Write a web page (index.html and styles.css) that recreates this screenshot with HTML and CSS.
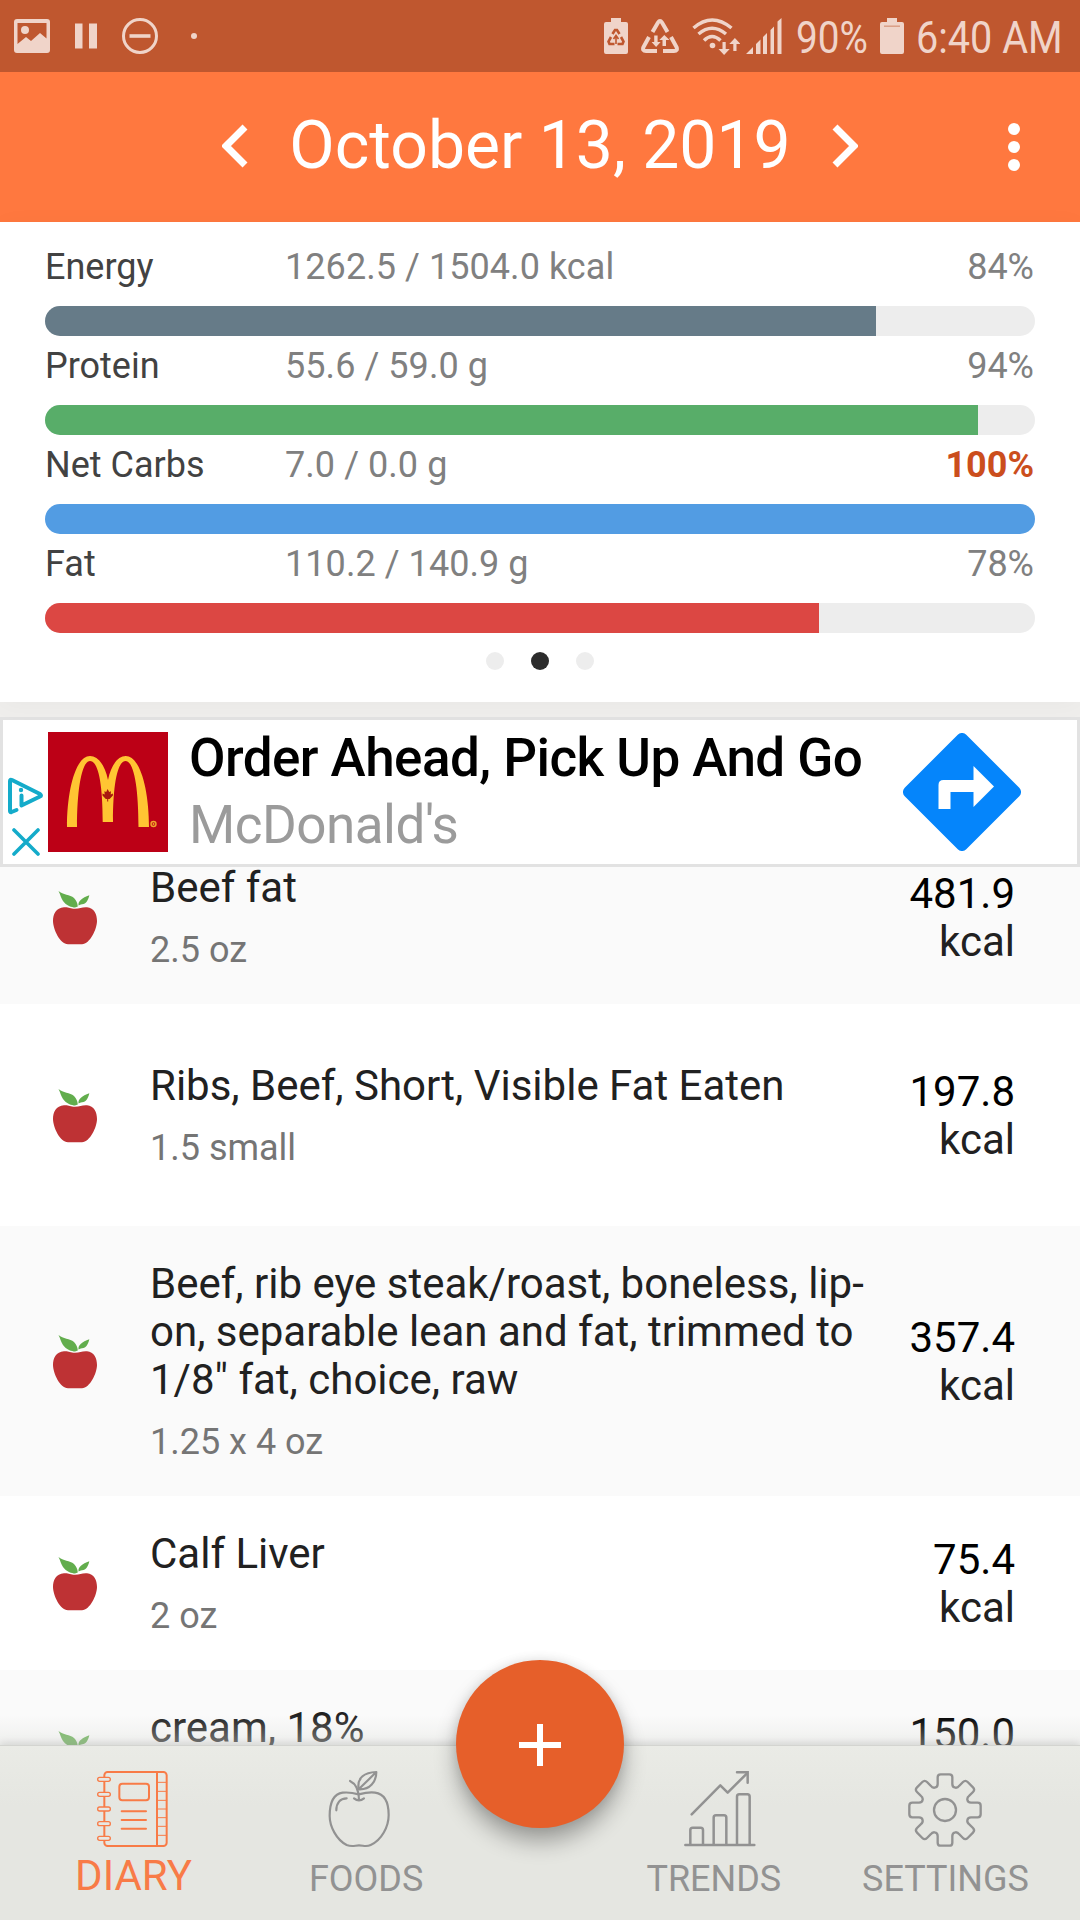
FILE: index.html
```html
<!DOCTYPE html>
<html lang="en">
<head>
    <meta charset="UTF-8">
    <meta name="viewport" content="width=device-width, initial-scale=1.0">
    <title>Diary</title>
    <link rel="stylesheet" href="styles.css">
</head>
<body>
    <!-- Shared food icon -->
    <svg class="defs" width="0" height="0">
        <symbol id="apple" viewBox="0 0 44 54">
            <path fill="#62ad4d" d="M5.500 0C10 4 17 3.500 21 7C23.500 9.500 24.500 12 24.800 15.500L22 16.500C19 16.500 13 14.500 10 10C8 7 7.500 4 5.500 0ZM25.500 14.500C25 10 29 7 36.300 4.300C35.500 8 34 12 30.500 13C28.500 13.500 27 13.500 25.500 14.500Z"/>
            <path fill="#be3234" d="M22 17.800C17 17.500 16 16 11 16.300C3 17 0 23 0 30C0 38 7 53.300 15 53.300H29C37 53 44 38 44 30C44 23 41 17 34 16.300C29 16 27 17.500 22 17.800Z"/>
        </symbol>
    </svg>

    <div class="app">
        <div class="status-bar">
            <svg class="st-gallery" width="36" height="36" viewBox="0 0 36 36"><path fill="currentColor" fill-rule="evenodd" d="M3 1H33Q36 1 36 4V32Q36 35 33 35H3Q0 35 0 32V4Q0 1 3 1ZM3.500 5V26L12 19L17 23L26 15L32.500 20.500V5Z"/><circle cx="11" cy="12" r="4" fill="currentColor"/></svg>
            <svg class="st-pause" width="22" height="36" viewBox="0 0 22 36"><path fill="currentColor" d="M0 5.500h7.500v25H0zM14 5.500h8v25h-8z"/></svg>
            <svg class="st-minus" width="36" height="36" viewBox="0 0 36 36"><circle cx="18" cy="18" r="16.500" fill="none" stroke="currentColor" stroke-width="3"/><path fill="currentColor" d="M7.500 16.200h21v3.600h-21z"/></svg>
            <svg class="st-dot" width="6" height="6" viewBox="0 0 6 6"><circle cx="3" cy="3" r="3" fill="currentColor"/></svg>

            <div class="status-right">
                <svg width="24" height="36" viewBox="0 0 24 36"><path fill="currentColor" d="M7 0H17V4H22Q24 4 24 6V34Q24 36 22 36H2Q0 36 0 34V6Q0 4 2 4H7Z"/><g fill="none" stroke="#bf572f" stroke-width="2.600"><path d="M8.500 16L11 12H13L15.500 16"/><path d="M7 19L4.500 23.500L5.500 26H10.500"/><path d="M17 19L19.500 23.500L18.500 26H13.500"/><path stroke-width="1.600" d="M12 26V18M9.500 21L12 17.500L14.500 21"/></g></svg>
                <svg class="st-recycle" width="38" height="36" viewBox="0 0 38 36"><g fill="none" stroke="currentColor" stroke-width="4"><path d="M11.500 14L17 4.500Q19 1.500 21 4.500L26.500 14"/><path d="M8 19L2.500 29Q1 33 5 33H16"/><path d="M30 19L35.500 29Q37 33 33 33H22"/></g><path fill="currentColor" d="M13.200 17.500h3.400v6.500h3l-4.500 5l-4.500-5h2.600zM21.500 28h3.500v-6h3.500l-5.200-5l-5 5h3.200z"/></svg>
                <svg class="st-wifi" width="48" height="37" viewBox="0 0 48 37"><g fill="none" stroke="currentColor" stroke-width="3.500"><path d="M1.500 10Q20 -6 39.500 10"/><path d="M6.500 16Q20 4.500 34 16"/><path d="M12 22.500Q20 14.500 28.500 22.500"/></g><circle cx="20.500" cy="27.500" r="2.800" fill="currentColor"/><path fill="currentColor" d="M30.500 24h3.200v7h4l-5.600 6l-5.600-6h4zM41.300 33h3.200v-7h4l-5.600-6l-5.600 6h4z"/></svg>
                <svg class="st-signal" width="36" height="36" viewBox="0 0 36 36"><path fill="currentColor" d="M0 36L7 29V36ZM10 26L14.500 21.500V36H10ZM17 19L21 15V36H17ZM24.500 12L28 8.500V36H24.500ZM31.500 3.500L35.500 0V36H31.500Z"/></svg>
                <span class="st-battery-text"><span>90%</span></span>
                <svg class="st-battery" width="24" height="36" viewBox="0 0 24 36"><path fill="currentColor" d="M7 0H17V4H22Q24 4 24 6V34Q24 36 22 36H2Q0 36 0 34V6Q0 4 2 4H7Z"/><path fill="#d99a80" d="M4 7.500h16v1.400H4z"/></svg>
                <span class="st-time"><span>6:40 AM</span></span>
            </div>
        </div>

        <header class="date-bar">
            <svg class="chevron" width="26" height="44" viewBox="0 0 26 44"><path fill="none" stroke="#fff" stroke-width="7" d="M23 3L4 22L23 41"/></svg>
            <h1>October 13, 2019</h1>
            <svg class="chevron" width="26" height="44" viewBox="0 0 26 44"><path fill="none" stroke="#fff" stroke-width="7" d="M3 3L22 22L3 41"/></svg>
            <svg class="more" width="12" height="48" viewBox="0 0 12 48"><g fill="#fff"><circle cx="6" cy="6" r="6"/><circle cx="6" cy="24" r="6"/><circle cx="6" cy="42" r="6"/></g></svg>
        </header>

        <section class="summary">
            <div class="nutrient">
                <div class="nutrient-text"><span class="name">Energy</span><span class="amount">1262.5 / 1504.0 kcal</span><span class="percent">84%</span></div>
                <div class="track"><div class="fill energy" style="width: 83.94%"></div></div>
            </div>
            <div class="nutrient">
                <div class="nutrient-text"><span class="name">Protein</span><span class="amount">55.6 / 59.0 g</span><span class="percent">94%</span></div>
                <div class="track"><div class="fill protein" style="width: 94.24%"></div></div>
            </div>
            <div class="nutrient">
                <div class="nutrient-text"><span class="name">Net Carbs</span><span class="amount">7.0 / 0.0 g</span><span class="percent over">100%</span></div>
                <div class="track"><div class="fill carbs" style="width: 100%"></div></div>
            </div>
            <div class="nutrient">
                <div class="nutrient-text"><span class="name">Fat</span><span class="amount">110.2 / 140.9 g</span><span class="percent">78%</span></div>
                <div class="track"><div class="fill fat" style="width: 78.18%"></div></div>
            </div>
            <div class="dots"><i></i><i class="active"></i><i></i></div>
        </section>

        <section class="ad">
            <div class="ad-controls">
                <svg width="36" height="38" viewBox="0 0 36 38"><path fill="none" stroke="#14abca" stroke-width="4" stroke-linejoin="round" stroke-linecap="round" d="M8.500 33L3.500 35Q2 35.500 2 34V4Q2 2 4 3L32 17Q34 18.500 32 19.500L13.500 28.500V18.500"/><circle cx="13" cy="13" r="2.200" fill="#14abca"/></svg>
                <svg class="ad-close" width="28" height="28" viewBox="0 0 28 28"><path fill="none" stroke="#14abca" stroke-width="3.600" stroke-linecap="round" d="M2 2L26 26M26 2L2 26"/></svg>
            </div>
            <svg class="ad-logo" width="120" height="120" viewBox="0 0 120 120">
                <rect width="120" height="120" fill="#bc0016"/>
                <path fill="#ffc533" d="M19 95C19 57 28 24 42 24C50 24 57 33 60 48C63 33 70 24 77.700 24C92 24 101 57 101 95H90.500C90.500 56 86 29 77.500 29C70 29 65 50 65 90H54.700C54.700 50 50 29 42 29C34 29 29 56 29 95Z"/>
                <path fill="#a9190f" d="M59.600 57l1.600 3l1.800-.8l-.3 3.200l2.200-.8v2l-3.300 3.300h-1.400v2.500h-1v-2.500h-1.400l-3.300-3.300v-2l2.200 .8l-.3-3.200l1.800 .8z"/>
                <circle cx="105.500" cy="92" r="2.500" fill="none" stroke="#f0a52c" stroke-width="1.400"/><circle cx="105.500" cy="92" r="1" fill="#f0a52c"/>
            </svg>
            <div class="ad-text">
                <div class="ad-title">Order Ahead, Pick Up And Go</div>
                <div class="ad-brand">McDonald's</div>
            </div>
            <svg class="ad-go" width="118" height="118" viewBox="0 0 118 118"><rect x="15.500" y="15.500" width="87" height="87" rx="6" fill="#0585fb" transform="rotate(45 59 59)"/><path fill="#fff" d="M35.500 76V52Q35.500 47 40.500 47H70.500V33L91 53.500L70.500 74V59H47.500V76Z"/></svg>
        </section>

        <main class="food-list">
            <div class="food">
                <svg class="food-icon"><use href="#apple"/></svg>
                <div class="food-info"><div class="food-name">Beef fat</div><div class="food-qty">2.5 oz</div></div>
                <div class="food-energy"><span>481.9</span> kcal</div>
            </div>
            <div class="food tall">
                <svg class="food-icon"><use href="#apple"/></svg>
                <div class="food-info"><div class="food-name">Ribs, Beef, Short, Visible Fat Eaten</div><div class="food-qty">1.5 small</div></div>
                <div class="food-energy"><span>197.8</span> kcal</div>
            </div>
            <div class="food">
                <svg class="food-icon"><use href="#apple"/></svg>
                <div class="food-info"><div class="food-name">Beef, rib eye steak/roast, boneless, lip-on, separable lean and fat, trimmed to 1/8" fat, choice, raw</div><div class="food-qty">1.25 x 4 oz</div></div>
                <div class="food-energy"><span>357.4</span> kcal</div>
            </div>
            <div class="food">
                <svg class="food-icon"><use href="#apple"/></svg>
                <div class="food-info"><div class="food-name">Calf Liver</div><div class="food-qty">2 oz</div></div>
                <div class="food-energy"><span>75.4</span> kcal</div>
            </div>
            <div class="food">
                <svg class="food-icon"><use href="#apple"/></svg>
                <div class="food-info"><div class="food-name">cream, 18%</div><div class="food-qty"></div></div>
                <div class="food-energy"><span>150.0</span></div>
            </div>
        </main>

        <nav class="tabs">
            <a class="tab diary active">
                <svg width="74" height="78" viewBox="288 390 222 234">
                    <g fill="none" stroke="currentColor" stroke-width="6" stroke-linecap="round">
                        <rect x="313" y="396" width="187" height="222" rx="10"/>
                        <path d="M471 396V618"/>
                        <rect x="358" y="431" width="89" height="50" rx="9"/>
                        <path d="M365 514H438M365 540H438M365 566H438"/>
                        <path stroke-width="3" d="M471 427H500M471 454H500M471 481H500M471 507H500M471 533H500M471 559H500M471 586H500"/>
                    </g>
                    <g fill="#e7e7e3" stroke="currentColor" stroke-width="4">
                        <rect x="293" y="412" width="38" height="12" rx="6"/><rect x="293" y="457" width="38" height="12" rx="6"/><rect x="293" y="501" width="38" height="12" rx="6"/><rect x="293" y="545" width="38" height="12" rx="6"/><rect x="293" y="589" width="38" height="12" rx="6"/>
                    </g>
                </svg>
                <span>DIARY</span>
            </a>
            <a class="tab foods">
                <svg width="74" height="78" viewBox="966 390 222 234">
                    <g fill="none" stroke="currentColor" stroke-width="6.500" stroke-linecap="round" stroke-linejoin="round">
                        <path d="M1076 463C1058 458 1045 456 1028 458C1000 462 989 490 989 528C989 560 1010 600 1040 615C1057 622 1065 616 1077 616C1090 616 1098 622 1112 615C1145 600 1166 560 1166 525C1166 490 1155 462 1125 458C1110 456 1092 459 1076 463Z"/>
                        <path d="M1050 423C1067 431 1077 450 1077 480M1062 475Q1077 487 1092 475"/>
                        <path d="M1076 448C1070 412 1095 397 1129 396C1129 425 1110 450 1076 448ZM1076 448L1125 400"/>
                        <path d="M1009 511C1009 490 1020 475 1040 475"/>
                    </g>
                </svg>
                <span>FOODS</span>
            </a>
            <button class="add" aria-label="Add"><svg width="42" height="42" viewBox="0 0 42 42"><path fill="#fff" d="M18 0h6v18h18v6H24v18h-6V24H0v-6h18z"/></svg></button>
            <a class="tab trends">
                <svg width="74" height="78" viewBox="129 390 222 234">
                    <g fill="none" stroke="currentColor" stroke-width="7.500" stroke-linecap="round" stroke-linejoin="round">
                        <path d="M155 523L241 436L263 458L321 400"/>
                        <path stroke-linejoin="miter" d="M291 397H323V428"/>
                        <path d="M151 614V570Q151 563 158 563H182Q189 563 189 570V614M221 614V533Q221 526 228 526H252Q259 526 259 533V614M291 614V470Q291 463 298 463H322Q329 463 329 470V614M136 615H343"/>
                    </g>
                </svg>
                <span>TRENDS</span>
            </a>
            <a class="tab settings">
                <svg width="74" height="78" viewBox="805 390 222 234">
                    <g fill="none" stroke="currentColor" stroke-width="7" transform="translate(916 510)">
                        <path id="gear" d="M0-107H13Q22-107 22-98V-78Q22-68 31-67Q38-66 43-73L54-84Q61-91 68-84L84-68Q91-61 84-54L73-43Q66-38 67-31Q68-22 78-22H98Q107-22 107-13V0"/>
                        <use href="#gear" transform="rotate(90)"/><use href="#gear" transform="rotate(180)"/><use href="#gear" transform="rotate(270)"/>
                        <circle r="33"/>
                    </g>
                </svg>
                <span>SETTINGS</span>
            </a>
        </nav>
    </div>
</body>
</html>
```
FILE: styles.css
```css
* { box-sizing: border-box; }
body { margin: 0; font-family: Roboto, 'Liberation Sans', sans-serif; background-color: #fff; color: #212121; }
svg { display: block; flex: none; }
.defs { position: absolute; }
.app { width: 1080px; height: 1920px; display: flex; flex-direction: column; overflow: hidden; }

/* Status bar */
.status-bar { height: 72px; flex: none; background-color: #bf572f; color: #f0d4c9; display: flex; align-items: center; padding: 0 20px 0 14px; }
.st-pause { margin-left: 25px; }
.st-minus { margin-left: 25px; }
.st-dot { margin-left: 33px; }
.status-right { margin-left: auto; display: flex; align-items: center; }
.st-recycle { margin-left: 13px; }
.st-wifi { margin-left: 13px; }
.st-signal { margin-left: 6px; }
.st-battery-text, .st-time { font-size: 45px; line-height: 72px; padding-top: 3px; white-space: nowrap; }
.st-battery-text span, .st-time span { display: inline-block; transform: scaleX(0.86); transform-origin: left; }
.st-time span { transform: scaleX(0.88); }
.st-battery-text { width: 70px; margin-left: 14px; }
.st-battery { margin-left: 14px; }
.st-time { width: 144px; margin-left: 12px; }

/* Date header */
.date-bar { height: 150px; flex: none; background-color: #ff783f; color: #fff; display: flex; align-items: center; padding: 0 60px 0 222px; }
.date-bar h1 { margin: 0; width: 584px; text-align: center; font-size: 66px; font-weight: 400; line-height: 80px; padding-bottom: 2px; white-space: nowrap; }
.chevron { margin-bottom: 2px; }
.more { margin-left: auto; }

/* Nutrient summary */
.summary { height: 480px; flex: none; padding: 24px 45px 0; background-color: #fff; position: relative; box-shadow: 0 3px 24px rgba(0,0,0,0.03); }
.nutrient { height: 99px; }
.nutrient-text { height: 60px; display: flex; font-size: 36px; line-height: 42px; color: #808080; }
.name { width: 240px; color: #424242; }
.amount { letter-spacing: 0.06px; }
.percent { margin: 0 1px 0 auto; }
.over { color: #cb4e1d; font-weight: 700; }
.track { height: 30px; border-radius: 15px; background-color: #ededed; overflow: hidden; }
.fill { height: 100%; }
.energy { background-color: #667b88; }
.protein { background-color: #58ad69; }
.carbs { background-color: #529ce3; }
.fat { background-color: #dc4743; }
.dots { display: flex; justify-content: center; gap: 27px; padding-top: 10px; }
.dots i { width: 18px; height: 18px; border-radius: 50%; background-color: #ededed; }
.dots .active { background-color: #2c2c2c; }

/* Ad banner */
.ad { height: 165px; flex: none; border-top: 15px solid #efeeec; background-color: #fff; box-shadow: inset 0 0 0 3px #e2e2e2; display: flex; align-items: flex-start; padding: 15px 59px 0 8px; }
.ad-controls { width: 40px; padding-top: 45px; }
.ad-close { margin: 13px 0 0 4px; }
.ad-text { margin-left: 21px; font-size: 53px; white-space: nowrap; }
.ad-title { line-height: 62px; color: #000; font-weight: 500; letter-spacing: -0.55px; margin-top: -5px; }
.ad-brand { line-height: 62px; color: #9b9b9b; margin-top: 5px; letter-spacing: -0.5px; }
.ad-go { margin: 1px 0 0 auto; }

/* Food list */
.food-list { flex: 1; min-height: 0; overflow: hidden; position: relative; }
.food-list::after { content: ''; position: absolute; left: 0; right: 0; bottom: 0; height: 30px; background: linear-gradient(rgba(225,226,222,0), rgba(225,226,222,0.45)); }
.food { min-height: 174px; padding: 34px 65px 33px 53px; display: flex; align-items: center; background-color: #fff; }
.food:first-child { margin-top: -37px; }
.food:nth-child(odd) { background-color: #fafafa; }
.tall { min-height: 222px; }
.food-icon { width: 44px; height: 54px; }
.food-info { width: 730px; margin-left: 53px; }
.food-name { font-size: 42px; line-height: 48px; }
.food-qty { min-height: 42px; font-size: 36px; line-height: 42px; margin-top: 17px; color: #757575; }
.food-energy { width: 110px; min-height: 96px; margin-left: auto; font-size: 42px; line-height: 48px; text-align: right; }
.food-energy span { color: #000; }

/* Bottom tabs */
.tabs { height: 175px; flex: none; position: relative; padding: 24px 19px 0; display: flex; justify-content: space-between; background: linear-gradient(#eaebe6, #e5e6e1 60px); border-top: 1px solid #d3d4d0; box-shadow: 0 -2px 8px rgba(0,0,0,0.12); }
.tab { width: 231px; display: flex; flex-direction: column; align-items: center; color: #929292; font-size: 36px; line-height: 42px; }
.tab span { margin-top: 10px; }
.active.tab { color: #f87b47; font-size: 42px; }
.active.tab span { margin-top: 7px; padding-left: 2px; }
.diary { margin-left: -2px; margin-right: 2px; }
.foods svg { margin-right: 14px; }
.add { position: absolute; left: 456px; top: -86px; width: 168px; height: 168px; padding: 2px 0 0; border: 0; border-radius: 50%; background-color: #e65f2a; display: flex; align-items: center; justify-content: center; box-shadow: 0 14px 22px rgba(0,0,0,0.3), 0 0 12px rgba(0,0,0,0.1); }
.trends { margin-left: 116px; }
.trends svg { margin-left: 12px; }
```
